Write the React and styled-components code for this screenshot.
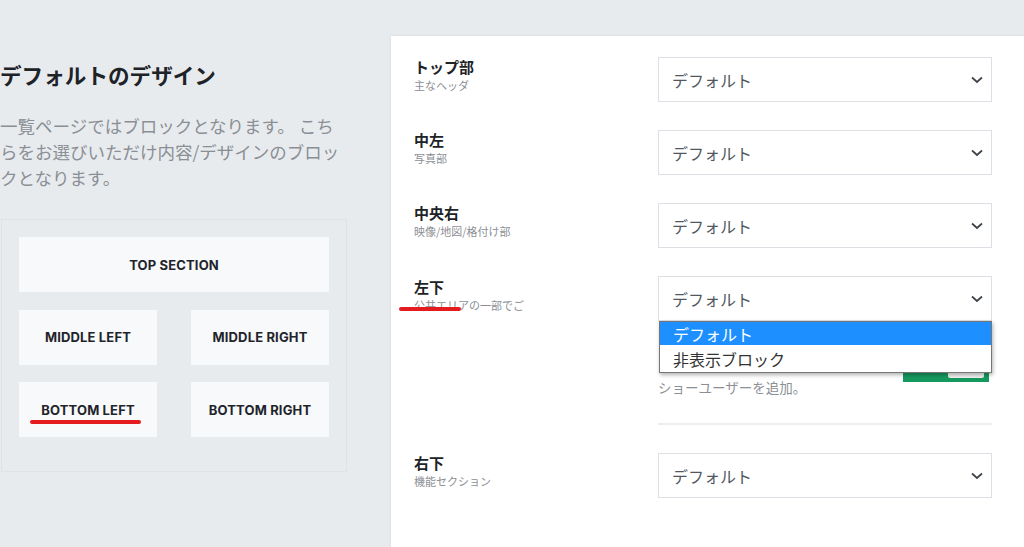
import React from "react";
import styled, { createGlobalStyle } from "styled-components";

const GlobalStyle = createGlobalStyle`
  html, body { margin: 0; padding: 0; }
  body {
    background: #e8ebee;
    font-family: "Noto Sans CJK JP", "Noto Sans", sans-serif;
    overflow: hidden;
  }
`;

const Page = styled.div`
  display: flex;
  width: 1024px;
  height: 547px;
  background: #e8ebee;
  overflow: hidden;
`;

const LeftColumn = styled.div`
  width: 391px;
  flex: none;
  padding-top: 60px;
  box-sizing: border-box;
`;

const Title = styled.h2`
  margin: 0;
  font-size: 21.6px;
  line-height: 30px;
  font-weight: 700;
  color: #1d2327;
`;

const Description = styled.p`
  margin: 23px 0 0;
  width: 346px;
  font-size: 17.5px;
  line-height: 26px;
  color: #8a8f95;
`;

const Diagram = styled.div`
  margin: 28px 0 0 1px;
  width: 346px;
  box-sizing: border-box;
  border: 1px solid #e0e3e6;
  padding: 17px 17px 34px;
  display: grid;
  grid-template-columns: 138px 138px;
  column-gap: 34px;
  row-gap: 17.5px;
`;

const Block = styled.div`
  position: relative;
  grid-column: ${(p) => (p.$wide ? "1 / span 2" : "auto")};
  height: 55px;
  background: #f7f9fb;
  display: flex;
  align-items: center;
  justify-content: center;
  font-family: Inter, "Liberation Sans", sans-serif;
  font-weight: 700;
  font-size: 13px;
  color: #1f242b;
  text-transform: uppercase;
  letter-spacing: 0.15px;
`;

const RedMark = styled.span`
  position: absolute;
  height: 4px;
  border-radius: 3px;
  background: #e51c1f;
  left: ${(p) => p.$left}px;
  top: ${(p) => p.$top}px;
  width: ${(p) => p.$width}px;
`;

const Panel = styled.div`
  flex: 1;
  margin-top: 36px;
  background: #ffffff;
  box-shadow: 0 0 3px rgba(0, 0, 0, 0.08);
  padding: 21px 0 0 23px;
  display: flex;
  flex-direction: column;
  gap: 28px;
`;

const Row = styled.div`
  display: grid;
  grid-template-columns: 244px 334px;
  align-items: start;
`;

const LabelBlock = styled.div`
  position: relative;
  padding-top: ${(p) => p.$offset ?? 0}px;
`;

const Label = styled.div`
  font-size: 15px;
  line-height: 20px;
  font-weight: 700;
  color: #1d2327;
`;

const SubLabel = styled.div`
  font-size: 11px;
  line-height: 16px;
  color: #8c8f94;
`;

const Control = styled.div`
  position: relative;
  display: flex;
  flex-direction: column;
`;

const Select = styled.div`
  height: 45px;
  box-sizing: border-box;
  border: 1px solid #dcdfe3;
  background: #fff;
  display: flex;
  align-items: center;
  justify-content: space-between;
  padding: 0 7px 0 13px;
  font-size: 16px;
  color: #50575e;
`;

const Chevron = () => (
  <svg width="14" height="8" viewBox="0 0 14 8">
    <polyline points="2,1.5 7,6 12,1.5" fill="none" stroke="#3c434a" strokeWidth="1.7" />
  </svg>
);

const Dropdown = styled.div`
  position: absolute;
  top: 45px;
  left: 1px;
  width: 333px;
  box-sizing: border-box;
  border: 1px solid #767676;
  background: #fff;
  box-shadow: 1px 2px 4px rgba(0, 0, 0, 0.3);
  z-index: 2;
`;

const Option = styled.div`
  height: ${(p) => (p.$active ? 23 : 27)}px;
  display: flex;
  align-items: center;
  padding-left: 13px;
  font-size: 16px;
  background: ${(p) => (p.$active ? "#1e8fff" : "#fff")};
  color: ${(p) => (p.$active ? "#fff" : "#333")};
`;

const Extras = styled.div`
  display: flex;
  justify-content: space-between;
  align-items: flex-start;
  margin-top: 37px;
`;

const HelpText = styled.div`
  padding-top: 20px;
  font-size: 13.5px;
  line-height: 18px;
  color: #8c8f94;
`;

const Toggle = styled.div`
  position: relative;
  width: 86px;
  height: 24px;
  margin-right: 3px;
  background: #16995f;
`;

const Knob = styled.div`
  position: absolute;
  right: 5px;
  bottom: 4px;
  width: 36px;
  height: 18px;
  background: #f2f2f2;
  border-radius: 2px;
`;

const Divider = styled.hr`
  margin: 27px 0 0;
  border: none;
  height: 2px;
  background: #eceef0;
`;

const SelectBox = () => (
  <Select>
    <span>デフォルト</span>
    <Chevron />
  </Select>
);

const rows = [
  { label: "トップ部", sub: "主なヘッダ" },
  { label: "中左", sub: "写真部" },
  { label: "中央右", sub: "映像/地図/格付け部" },
];

export default function App() {
  return (
    <>
      <GlobalStyle />
      <Page>
        <LeftColumn>
          <Title>デフォルトのデザイン</Title>
          <Description>
            一覧ページではブロックとなります。 こちらをお選びいただけ内容/デザインのブロックとなります。
          </Description>
          <Diagram>
            <Block $wide>Top Section</Block>
            <Block>Middle Left</Block>
            <Block>Middle Right</Block>
            <Block>
              Bottom Left
              <RedMark $left={11} $top={38} $width={111} />
            </Block>
            <Block>Bottom Right</Block>
          </Diagram>
        </LeftColumn>
        <Panel>
          {rows.map((r) => (
            <Row key={r.label}>
              <LabelBlock>
                <Label>{r.label}</Label>
                <SubLabel>{r.sub}</SubLabel>
              </LabelBlock>
              <Control>
                <SelectBox />
              </Control>
            </Row>
          ))}
          <Row>
            <LabelBlock $offset={1}>
              <Label>左下</Label>
              <SubLabel>公共エリアの一部でご</SubLabel>
              <RedMark $left={-15} $top={31} $width={62} />
            </LabelBlock>
            <Control>
              <SelectBox />
              <Dropdown>
                <Option $active>デフォルト</Option>
                <Option>非表示ブロック</Option>
              </Dropdown>
              <Extras>
                <HelpText>ショーユーザーを追加。</HelpText>
                <Toggle>
                  <Knob />
                </Toggle>
              </Extras>
              <Divider />
            </Control>
          </Row>
          <Row>
            <LabelBlock>
              <Label>右下</Label>
              <SubLabel>機能セクション</SubLabel>
            </LabelBlock>
            <Control>
              <SelectBox />
            </Control>
          </Row>
        </Panel>
      </Page>
    </>
  );
}
